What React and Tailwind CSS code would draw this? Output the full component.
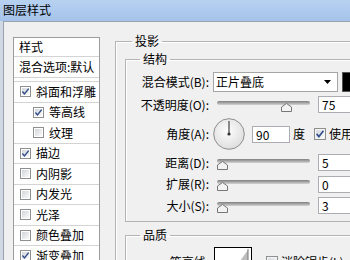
import React from 'react';

const items = [
  { label: '斜面和浮雕', checked: true },
  { label: '等高线', checked: true, indent: true },
  { label: '纹理', checked: false, indent: true },
  { label: '描边', checked: true },
  { label: '内阴影', checked: false },
  { label: '内发光', checked: false },
  { label: '光泽', checked: false },
  { label: '颜色叠加', checked: false },
  { label: '渐变叠加', checked: true },
];

function Check({ checked, size = 11 }) {
  return (
    <svg width={size} height={size} viewBox="0 0 11 11" className="shrink-0">
      <defs>
        <linearGradient id="cbg" x1="0" y1="0" x2="1" y2="1">
          <stop offset="0" stopColor="#d2d5da" />
          <stop offset="1" stopColor="#fafafa" />
        </linearGradient>
      </defs>
      <rect x="0.5" y="0.5" width="10" height="10" fill="#fff" stroke="#8e8f8f" />
      <rect x="2" y="2" width="7" height="7" fill="url(#cbg)" />
      {checked && <path d="M2.4 5.4 L4.5 7.9 L8.7 2.6" fill="none" stroke="#34508c" strokeWidth="1.5" />}
    </svg>
  );
}

function Slider({ pos }) {
  // thumb centre follows the value along the 93px groove
  const left = 4 + (93 * pos) / 100 - 5.5;
  return (
    <div className="relative w-[101px] h-[14px] shrink-0">
      <div className="ml-[4px] mt-[3px] w-[93px] h-[4px] rounded-[2px] bg-gradient-to-b from-[#7f7f7f] to-[#d4d4d4]" />
      <svg className="absolute top-[5px]" style={{ left: Math.max(left, 4) }} width="11" height="9" viewBox="0 0 11 9">
        <polygon points="5.5,0.5 10.5,4 10.5,8.5 0.5,8.5 0.5,4" fill="#f3f3f3" stroke="#777" />
      </svg>
    </div>
  );
}

function NumBox({ v }) {
  return (
    <div className="h-[17px] w-[40px] shrink-0 border border-[#abadb3] bg-white text-[12px] leading-[15px] pl-[3px]">
      {v}
    </div>
  );
}

function Label({ children }) {
  return <div className="w-[84px] shrink-0 text-right text-[12px] leading-[16px] pr-[1px]">{children}</div>;
}

export default function App() {
  return (
    <div className="w-[350px] h-[260px] overflow-hidden flex flex-col bg-[#cfd8e3] text-black font-['Noto_Sans_CJK_SC','Noto_Sans',sans-serif]">
      {/* 标题栏 */}
      <div className="h-[21px] shrink-0 bg-gradient-to-b from-[#b7d1f1] to-[#a5c3ea] pl-[3px] text-[12px] leading-[19px]">
        图层样式
      </div>

      <div className="flex-1 min-h-0 ml-[3px] border-l border-t border-[#9aa3ad] bg-[#f0f0f0] flex">
        {/* 左侧列表 */}
        <div className="ml-[9px] mt-[15px] w-[87px] h-[260px] shrink-0 border border-[#9c9c9c] bg-white text-[12px]">
          <div className="h-[19px] border-b border-[#d4d4d4] pl-[5px] leading-[18px]">样式</div>
          <div className="h-[21px] border-b border-[#d4d4d4] pl-[5px] leading-[20px]">混合选项:默认</div>
          <div className="h-[4px] border-b border-[#d4d4d4]" />
          {items.map((it) => (
            <div
              key={it.label}
              className={`flex items-center gap-[5px] h-[20.5px] border-b border-[#d4d4d4] ${it.indent ? 'pl-[19px]' : 'pl-[6px]'}`}
            >
              <Check checked={it.checked} />
              <span className="leading-[16px] whitespace-nowrap">{it.label}</span>
            </div>
          ))}
        </div>

        {/* 右侧设置 */}
        <fieldset className="ml-[15px] mt-[11px] w-[260px] h-[400px] min-w-0 shrink-0 border border-[#b4b4b4] shadow-[inset_1px_1px_0_#fff]">
          <legend className="ml-[16px] px-[3px] text-[12px] leading-[16px]">投影</legend>
          <div className="pl-[9px]">
            <fieldset className="mt-[2px] w-[240px] min-w-0 border border-[#b4b4b4] shadow-[inset_1px_1px_0_#fff] pb-[5px]">
              <legend className="ml-[14px] px-[3px] text-[12px] leading-[16px]">结构</legend>

              <div className="mt-[4px] h-[22px] flex items-center">
                <Label>混合模式(B):</Label>
                <div className="ml-[3px] w-[125px] h-[20px] shrink-0 border border-[#a5a5a5] bg-white flex items-center pl-[2px] pr-[6px] text-[12px]">
                  <span className="flex-1 leading-[16px]">正片叠底</span>
                  <svg width="7" height="4" viewBox="0 0 7 4">
                    <polygon points="0,0 7,0 3.5,4" fill="#000" />
                  </svg>
                </div>
                <div className="ml-[4px] w-[20px] h-[20px] shrink-0 bg-black border border-[#555]" />
              </div>

              <div className="h-[23px] flex items-center">
                <Label>不透明度(O):</Label>
                <div className="ml-[3px] flex items-center">
                  <Slider pos={75} />
                  <div className="ml-[4px]"><NumBox v="75" /></div>
                </div>
              </div>

              <div className="h-[36px] flex items-center">
                <Label>角度(A):</Label>
                <svg className="ml-[3px] shrink-0" width="32" height="32" viewBox="0 0 32 32">
                  <defs>
                    <radialGradient id="dial" cx="0.45" cy="0.4" r="0.6">
                      <stop offset="0" stopColor="#fdfdfd" />
                      <stop offset="1" stopColor="#dedede" />
                    </radialGradient>
                  </defs>
                  <circle cx="16" cy="16" r="15.3" fill="url(#dial)" stroke="#8d8d8d" />
                  <line x1="16" y1="3" x2="16" y2="16" stroke="#333" strokeWidth="1.1" />
                  <circle cx="16" cy="16" r="1.6" fill="#333" />
                </svg>
                <div className="ml-[7px] h-[17px] w-[38px] shrink-0 border border-[#abadb3] bg-white text-[12px] leading-[15px] pl-[3px]">
                  90
                </div>
                <span className="ml-[3px] text-[12px] leading-[16px]">度</span>
                <div className="ml-[9px] flex items-center gap-[3px]">
                  <Check checked size={12} />
                  <span className="text-[12px] leading-[16px] whitespace-nowrap">使用全局光(G)</span>
                </div>
              </div>

              <div className="h-[21px] flex items-center">
                <Label>距离(D):</Label>
                <div className="ml-[3px] flex items-center">
                  <Slider pos={0} />
                  <div className="ml-[4px]"><NumBox v="5" /></div>
                </div>
              </div>

              <div className="h-[22px] flex items-center">
                <Label>扩展(R):</Label>
                <div className="ml-[3px] flex items-center">
                  <Slider pos={0} />
                  <div className="ml-[4px]"><NumBox v="0" /></div>
                </div>
              </div>

              <div className="h-[21px] flex items-center">
                <Label>大小(S):</Label>
                <div className="ml-[3px] flex items-center">
                  <Slider pos={0} />
                  <div className="ml-[4px]"><NumBox v="3" /></div>
                </div>
              </div>
            </fieldset>

            <fieldset className="mt-[5px] w-[240px] h-[80px] min-w-0 border border-[#b4b4b4] shadow-[inset_1px_1px_0_#fff]">
              <legend className="ml-[14px] px-[3px] text-[12px] leading-[16px]">品质</legend>
              <div className="mt-[4px] flex items-start">
                <div className="mt-[7px]"><Label>等高线:</Label></div>
                <div className="ml-[4px] w-[38px] h-[30px] shrink-0 border border-black bg-white">
                  <svg width="36" height="28" viewBox="0 0 36 28">
                    <polygon points="14,28 33,2 33,28" fill="#bdbdbd" />
                    <line x1="33" y1="1" x2="33" y2="28" stroke="#777" />
                  </svg>
                </div>
                <div className="ml-[14px] mt-[7px] flex items-center gap-[3px]">
                  <Check checked={false} size={12} />
                  <span className="text-[12px] leading-[16px] whitespace-nowrap">消除锯齿(L)</span>
                </div>
              </div>
            </fieldset>
          </div>
        </fieldset>
      </div>
    </div>
  );
}
